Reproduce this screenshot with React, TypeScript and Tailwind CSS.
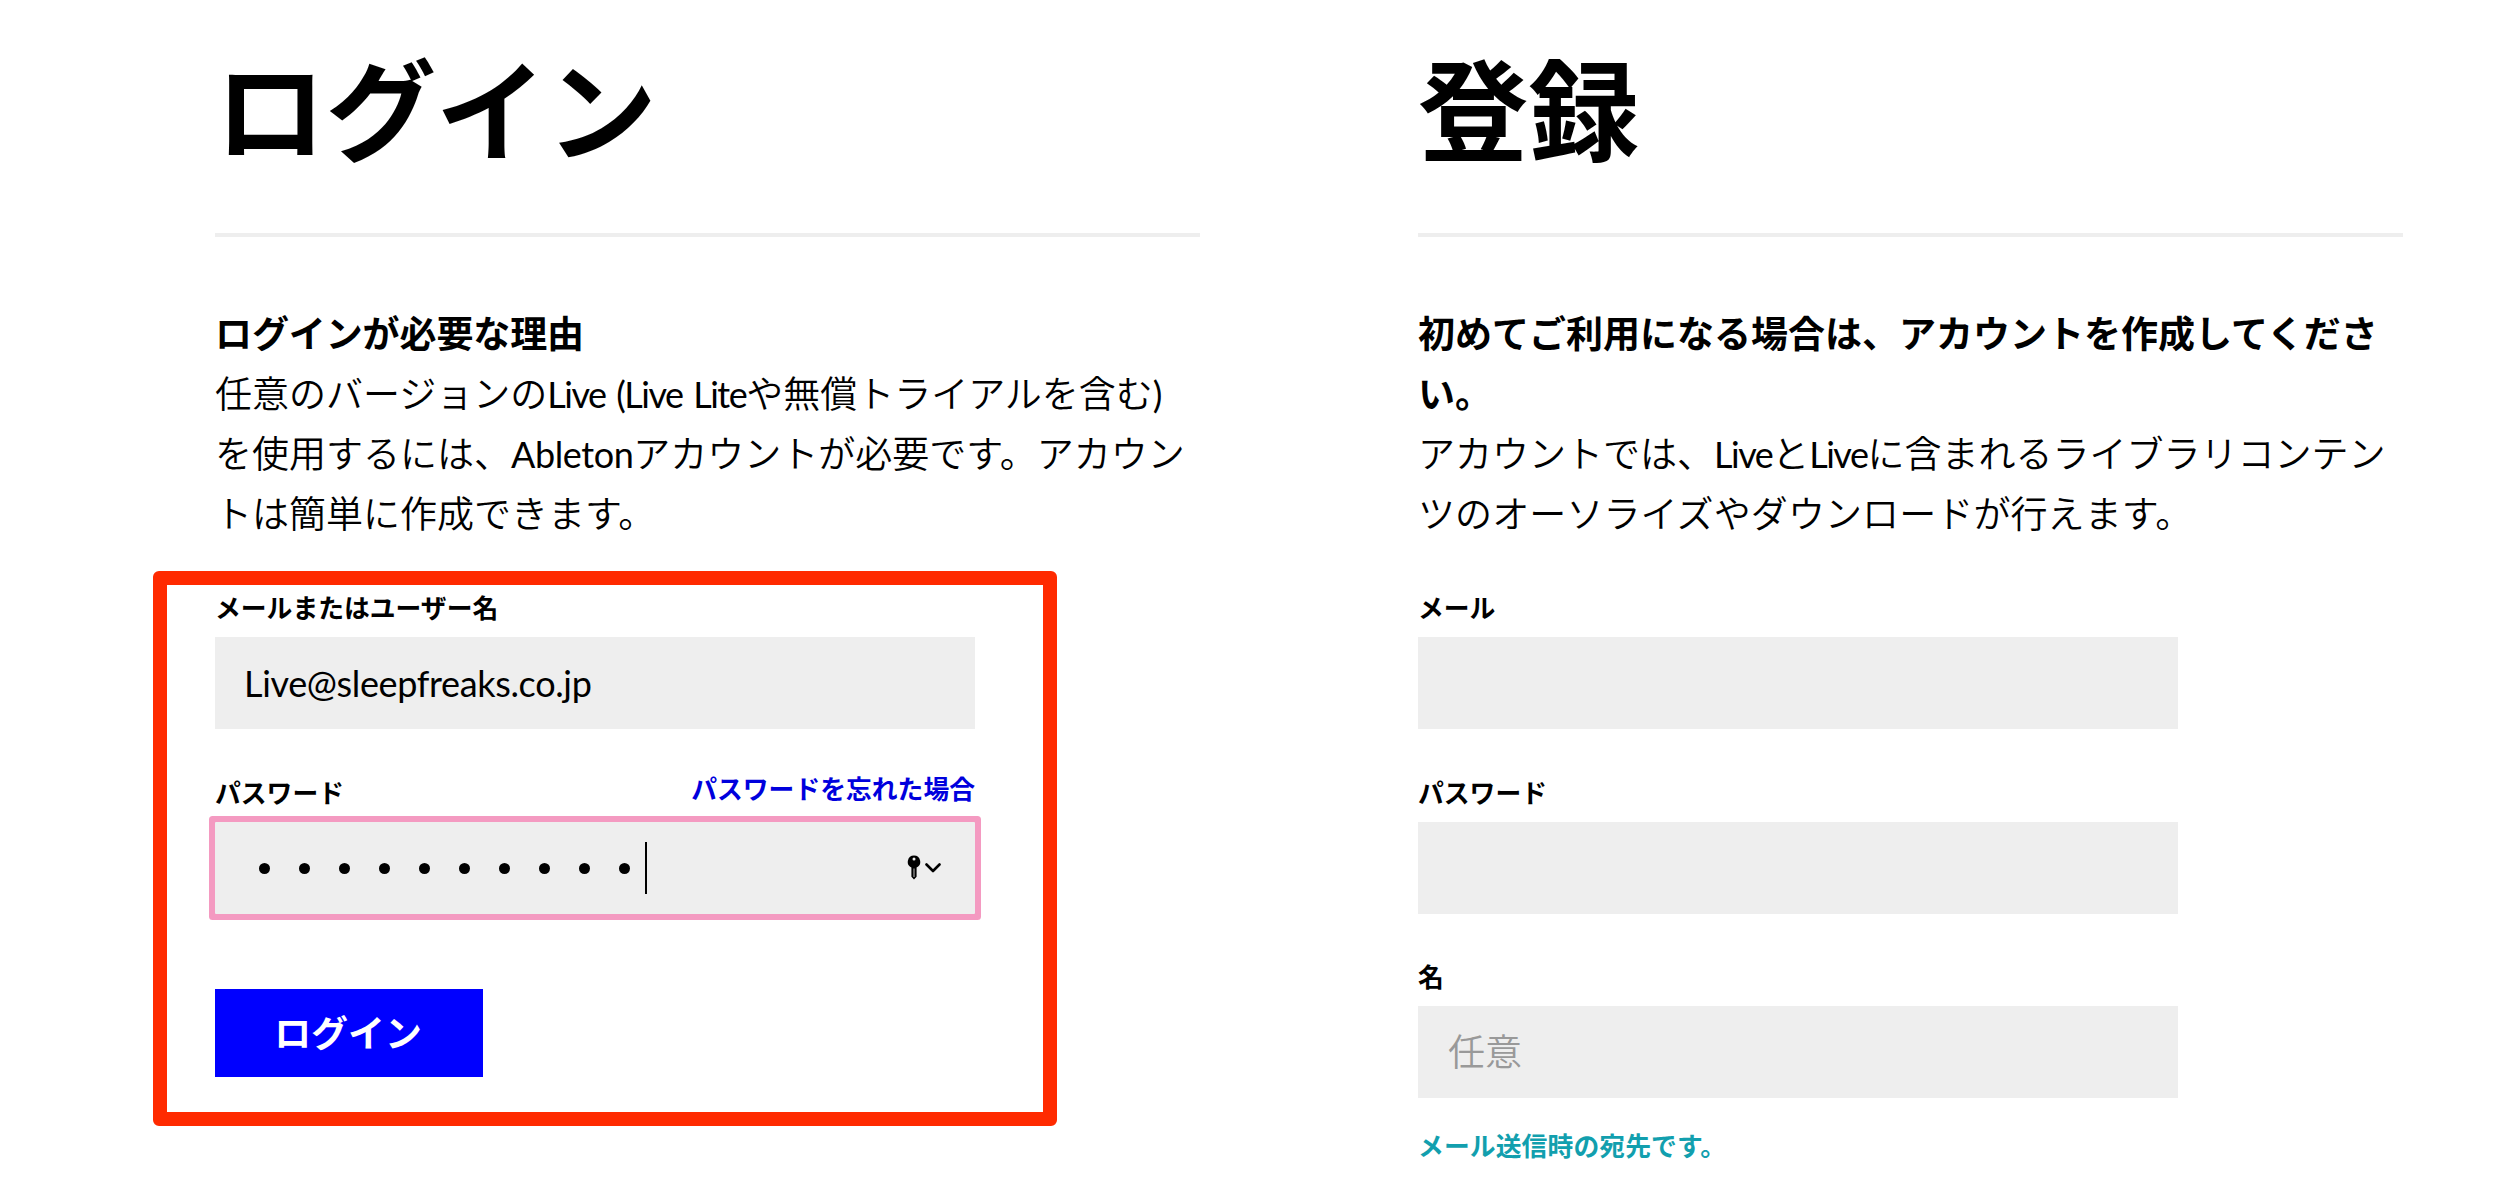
import React from 'react';

interface FieldProps {
  label: string;
  aside?: React.ReactNode;
  className?: string;
  children: React.ReactNode;
}

const PASSWORD_LENGTH = 10;

// Latin words inside the Japanese copy
const Latin = ({ className = 'tracking-[-1.5px]', children }: { className?: string; children: React.ReactNode }) => (
  <span className={`font-['Lato'] font-normal text-[36px] leading-none [word-spacing:3px] ${className}`}>{children}</span>
);

const Field = ({ label, aside, className = '', children }: FieldProps) => (
  <div className={`w-[760px] ${className}`}>
    <div className="flex justify-between h-[27px] mb-[17px] text-[25.8px] leading-[27px] font-bold">
      <label>{label}</label>
      {aside}
    </div>
    {children}
  </div>
);

const Column = ({ title, children }: { title: string; children: React.ReactNode }) => (
  <section className="w-[985px]">
    <h1 className="h-[120px] text-[110.7px] leading-[120px] tracking-[-0.3px] font-bold">{title}</h1>
    <hr className="mt-[68px] border-0 h-1 bg-[#eeeeee]" />
    {children}
  </section>
);

const KeyIcon = () => (
  <svg width="34" height="26" viewBox="0 0 34 26" fill="none">
    <path
      fillRule="evenodd"
      d="M7 0.5a6.3 6.3 0 0 1 2.6 12v9.3L7 24.5l-2.6-2.7v-9.3A6.3 6.3 0 0 1 7 0.5zM7 2.6a1.5 1.5 0 1 0 0 3a1.5 1.5 0 1 0 0-3zM6.6 13.5v8.5h.8v-8.5z"
      fill="#000"
    />
    <path d="M19.5 9.5l6.5 6.5l6.5-6.5" stroke="#000" strokeWidth="2.6" strokeLinecap="round" strokeLinejoin="round" />
  </svg>
);

const LoginColumn = () => (
  <Column title="ログイン">
    <div className="mt-[65px] h-[240px] text-[37px] leading-[60px] font-[350] whitespace-nowrap">
      <p className="font-bold tracking-[-0.1px]">ログインが必要な理由</p>
      <p>
        任意のバージョンの<Latin>Live (Live Lite</Latin>や無償トライアルを含む<Latin>)</Latin>
        <br />
        を使用するには、<Latin className="tracking-[-0.4px]">Ableton</Latin>アカウントが必要です。アカウン
        <br />
        トは簡単に作成できます。
      </p>
    </div>

    {/* Login form, outlined by the red marker */}
    <form className="relative mt-[51px]">
      <div className="absolute left-[-62px] top-[-22px] w-[904px] h-[555px] border-[14px] border-[#ff2a00] rounded-[6px] pointer-events-none" />
      <Field label="メールまたはユーザー名">
        <div className="h-[92px] px-[29px] bg-[#eeeeee] leading-[92px] font-['Lato'] text-[36px] tracking-[-0.35px]">
          Live@sleepfreaks.co.jp
        </div>
      </Field>
      <Field
        label="パスワード"
        className="mt-[49px]"
        aside={<a className="relative -top-1 text-[#0000dd]">パスワードを忘れた場合</a>}
      >
        <div className="flex items-center h-[92px] pl-[43.5px] pr-[34px] bg-[#eeeeee] rounded-[1px] ring-[6px] ring-[#f49ac1]">
          <div className="flex gap-[29px]">
            {Array.from({ length: PASSWORD_LENGTH }, (_, i) => (
              <span key={i} className="size-[11px] rounded-full bg-black" />
            ))}
          </div>
          <span className="ml-[15.5px] w-[2px] h-[52px] bg-black" />
          <span className="ml-auto">
            <KeyIcon />
          </span>
        </div>
      </Field>
      <button type="button" className="block mt-[75px] w-[268px] h-[88px] bg-[#0000ff] text-white text-[36.9px] leading-[84px] pb-1 pr-[2px] font-bold">
        ログイン
      </button>
    </form>
  </Column>
);

const RegisterColumn = () => (
  <Column title="登録">
    <div className="mt-[65px] h-[240px] text-[37px] leading-[60px] font-[350] whitespace-nowrap">
      <p className="font-bold">
        初めてご利用になる場合は、アカウントを作成してくださ
        <br />
        い。
      </p>
      <p>
        アカウントでは、<Latin>Live</Latin>と<Latin>Live</Latin>に含まれるライブラリコンテン
        <br />
        <span className="tracking-[0.1px]">ツのオーソライズやダウンロードが行えます。</span>
      </p>
    </div>

    <form className="mt-[51px]">
      <Field label="メール">
        <div className="h-[92px] bg-[#eeeeee]" />
      </Field>
      <Field label="パスワード" className="mt-[49px]">
        <div className="h-[92px] bg-[#eeeeee]" />
      </Field>
      <Field label="名" className="mt-[48px]">
        <div className="h-[92px] px-[30px] bg-[#eeeeee] text-[#999999] text-[37px] leading-[88px] font-[350]">任意</div>
      </Field>
      <p className="mt-[33px] text-[25.8px] leading-[27px] tracking-[0.1px] font-bold text-[#129fae]">メール送信時の宛先です。</p>
    </form>
  </Column>
);

export default function App() {
  return (
    <main
      lang="ja"
      className="flex gap-[218px] w-[2516px] h-[1180px] pt-[45px] pl-[215px] overflow-hidden bg-white text-black font-['Noto_Sans_CJK_JP',sans-serif]"
    >
      <LoginColumn />
      <RegisterColumn />
    </main>
  );
}
